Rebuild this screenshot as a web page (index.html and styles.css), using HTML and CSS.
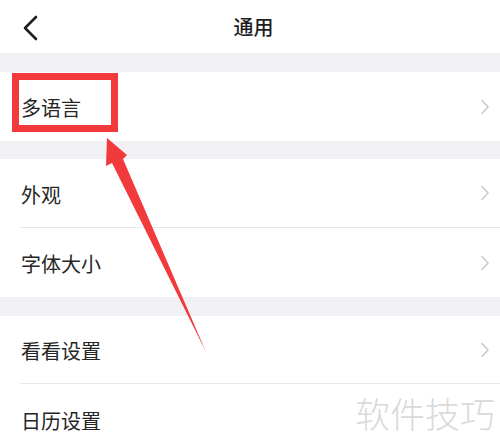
FILE: index.html
```html
<!DOCTYPE html>
<html lang="zh-CN">
<head>
<meta charset="utf-8">
<title>通用</title>
<link rel="stylesheet" href="styles.css">
</head>
<body>
<div class="page">
  <header class="nav">
    <svg class="back" width="20" height="26" viewBox="0 0 20 26"><path d="M15 2 L4 13 L15 24" fill="none" stroke="#1e1e1e" stroke-width="2.6" stroke-linecap="round" stroke-linejoin="round"/></svg>
    <div class="title">通用</div>
  </header>
  <div class="gap"></div>
  <section class="group">
    <div class="row row-a"><span class="label">多语言</span><svg class="chev" width="10" height="16" viewBox="0 0 10 16"><path d="M2 1.5 L8 8 L2 14.5" fill="none" stroke="#c9c9cc" stroke-width="1.5" stroke-linecap="round" stroke-linejoin="round"/></svg></div>
  </section>
  <div class="gap gap-b"></div>
  <section class="group">
    <div class="row row-b sep"><span class="label">外观</span><svg class="chev" width="10" height="16" viewBox="0 0 10 16"><path d="M2 1.5 L8 8 L2 14.5" fill="none" stroke="#c9c9cc" stroke-width="1.5" stroke-linecap="round" stroke-linejoin="round"/></svg></div>
    <div class="row row-a"><span class="label">字体大小</span><svg class="chev" width="10" height="16" viewBox="0 0 10 16"><path d="M2 1.5 L8 8 L2 14.5" fill="none" stroke="#c9c9cc" stroke-width="1.5" stroke-linecap="round" stroke-linejoin="round"/></svg></div>
  </section>
  <div class="gap"></div>
  <section class="group">
    <div class="row row-c sep"><span class="label">看看设置</span><svg class="chev" width="10" height="16" viewBox="0 0 10 16"><path d="M2 1.5 L8 8 L2 14.5" fill="none" stroke="#c9c9cc" stroke-width="1.5" stroke-linecap="round" stroke-linejoin="round"/></svg></div>
    <div class="row row-d"><span class="label">日历设置</span></div>
  </section>

  <div class="mark-box"></div>
  <svg class="arrow" width="500" height="448" viewBox="0 0 500 448"><polygon points="107,138 127,155 123,159 206,352 112,163 106,166" fill="#f23a3c"/></svg>
  <div class="watermark">软件技巧</div>
</div>
</body>
</html>
```
FILE: styles.css
```css
html, body {
  margin: 0;
  padding: 0;
  background: #ffffff;
}
body {
  font-family: "Noto Sans CJK SC", "Noto Sans", sans-serif;
  color: #222222;
}
.page {
  position: relative;
  width: 500px;
  height: 448px;
  overflow: hidden;
  background: #ffffff;
}
.nav {
  height: 53px;
  display: flex;
  align-items: center;
  justify-content: center;
  position: relative;
}
.back {
  position: absolute;
  left: 21px;
  top: 15px;
}
.title {
  font-size: 20px;
  font-weight: 500;
  color: #1e1e1e;
  line-height: 1;
  margin-top: 0;
  margin-left: 7px;
}
.gap {
  height: 19px;
  background: #f1f1f5;
}
.gap-b {
  height: 18px;
}
.group {
  background: #ffffff;
}
.row {
  display: flex;
  align-items: center;
  justify-content: space-between;
  margin-left: 20px;
  padding-right: 10px;
  height: 69px;
  box-sizing: border-box;
}
.row-b { height: 69px; }
.row-c { height: 68px; }
.row-d { height: 70px; }
.sep {
  border-bottom: 1px solid #e8e8ea;
}
.label {
  font-size: 20px;
  line-height: 1;
  color: #262626;
  margin-left: 1px;
  margin-top: 3px;
}
.chev {
  display: block;
}
.mark-box {
  position: absolute;
  left: 12px;
  top: 73px;
  width: 106px;
  height: 59px;
  box-sizing: border-box;
  border: 7px solid #f23a3c;
}
.arrow {
  position: absolute;
  left: 0;
  top: 0;
}
.watermark {
  position: absolute;
  left: 350px;
  top: 384px;
  width: 150px;
  height: 64px;
  background: #ffffff;
  font-size: 35px;
  font-weight: 300;
  line-height: 1;
  color: #dadada;
  padding: 11px 0 0 5px;
  box-sizing: border-box;
  white-space: nowrap;
}
```
